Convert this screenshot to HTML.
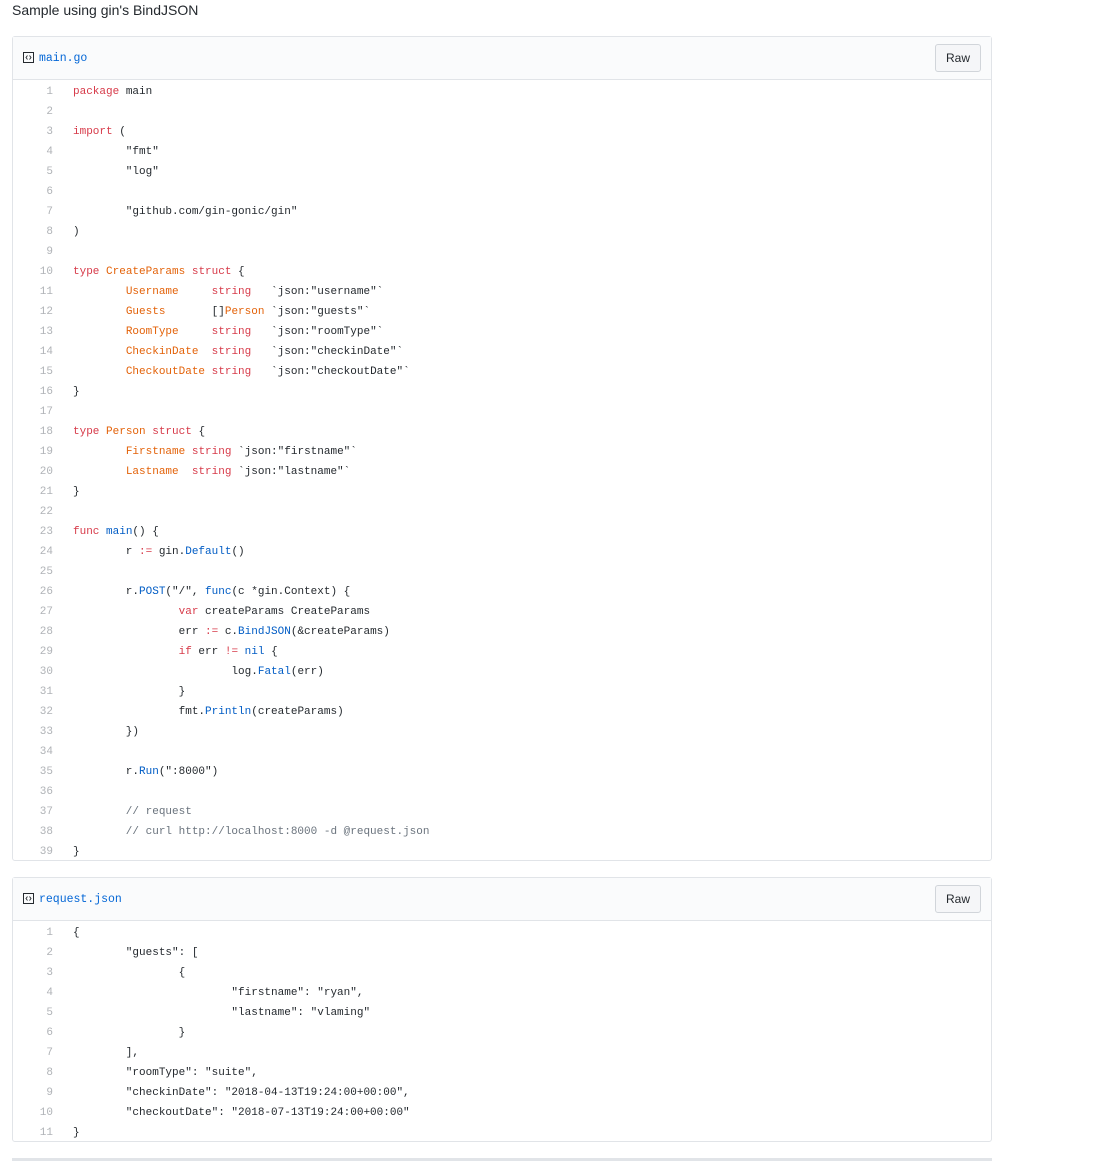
<!DOCTYPE html>
<html><head><meta charset="utf-8">
<style>
body{margin:0;background:#fff;font-family:"Liberation Sans",sans-serif;color:#24292e;width:1099px;height:1174px;overflow:hidden;position:relative}
.cap{position:absolute;left:12px;top:2px;font-size:14px;color:#24292e}
.box{position:absolute;left:12px;width:978px;border:1px solid #e1e4e8;border-radius:3px;background:#fff}
.hd{height:42px;background:#fafbfc;border-bottom:1px solid #e1e4e8;position:relative}
.fn{position:absolute;left:10px;top:15px;font-family:"Liberation Mono",monospace;font-size:11.5px;color:#0366d6;line-height:14px}
.fn svg{vertical-align:-2px;margin-right:5px}
.raw{position:absolute;right:10px;top:7px;width:46px;height:28px;border:1px solid #d1d5da;border-radius:3px;background:#f5f6f8;font-size:12px;text-align:center;line-height:26px;box-sizing:border-box;color:#24292e}
.code{font-family:"Liberation Mono",monospace;font-size:11px;line-height:20px;color:#24292e;position:relative;top:2px;margin-bottom:0}
.row{height:20px;display:flex;white-space:pre}
.n{width:40px;text-align:right;color:#b0b3b7;padding-right:20px;flex:none}
.k{color:#d73a49}.o{color:#e36209}.b{color:#005cc5}.c{color:#6a737d}
.rule{position:absolute;left:12px;top:1158px;width:980px;height:3px;background:#e1e4e8}
</style></head><body>
<div class="cap">Sample using gin's BindJSON</div>

<div class="box" style="top:36px">
<div class="hd"><div class="fn"><svg width="11" height="11" viewBox="0 0 11 11"><rect x="0.5" y="0.5" width="10" height="10" fill="none" stroke="#24292e"/><path d="M4.5 3.5L3 5.5L4.5 7.5M6.5 3.5L8 5.5L6.5 7.5" fill="none" stroke="#24292e" stroke-width="0.9"/></svg>main.go</div><div class="raw">Raw</div></div>
<div class="code">
<div class="row"><span class="n">1</span><span><span class="k">package</span> main</span></div>
<div class="row"><span class="n">2</span><span></span></div>
<div class="row"><span class="n">3</span><span><span class="k">import</span> (</span></div>
<div class="row"><span class="n">4</span><span>        "fmt"</span></div>
<div class="row"><span class="n">5</span><span>        "log"</span></div>
<div class="row"><span class="n">6</span><span></span></div>
<div class="row"><span class="n">7</span><span>        "github.com/gin-gonic/gin"</span></div>
<div class="row"><span class="n">8</span><span>)</span></div>
<div class="row"><span class="n">9</span><span></span></div>
<div class="row"><span class="n">10</span><span><span class="k">type</span> <span class="o">CreateParams</span> <span class="k">struct</span> {</span></div>
<div class="row"><span class="n">11</span><span>        <span class="o">Username</span>     <span class="k">string</span>   `json:"username"`</span></div>
<div class="row"><span class="n">12</span><span>        <span class="o">Guests</span>       []<span class="o">Person</span> `json:"guests"`</span></div>
<div class="row"><span class="n">13</span><span>        <span class="o">RoomType</span>     <span class="k">string</span>   `json:"roomType"`</span></div>
<div class="row"><span class="n">14</span><span>        <span class="o">CheckinDate</span>  <span class="k">string</span>   `json:"checkinDate"`</span></div>
<div class="row"><span class="n">15</span><span>        <span class="o">CheckoutDate</span> <span class="k">string</span>   `json:"checkoutDate"`</span></div>
<div class="row"><span class="n">16</span><span>}</span></div>
<div class="row"><span class="n">17</span><span></span></div>
<div class="row"><span class="n">18</span><span><span class="k">type</span> <span class="o">Person</span> <span class="k">struct</span> {</span></div>
<div class="row"><span class="n">19</span><span>        <span class="o">Firstname</span> <span class="k">string</span> `json:"firstname"`</span></div>
<div class="row"><span class="n">20</span><span>        <span class="o">Lastname</span>  <span class="k">string</span> `json:"lastname"`</span></div>
<div class="row"><span class="n">21</span><span>}</span></div>
<div class="row"><span class="n">22</span><span></span></div>
<div class="row"><span class="n">23</span><span><span class="k">func</span> <span class="b">main</span>() {</span></div>
<div class="row"><span class="n">24</span><span>        r <span class="k">:=</span> gin.<span class="b">Default</span>()</span></div>
<div class="row"><span class="n">25</span><span></span></div>
<div class="row"><span class="n">26</span><span>        r.<span class="b">POST</span>("/", <span class="b">func</span>(c *gin.Context) {</span></div>
<div class="row"><span class="n">27</span><span>                <span class="k">var</span> createParams CreateParams</span></div>
<div class="row"><span class="n">28</span><span>                err <span class="k">:=</span> c.<span class="b">BindJSON</span>(&amp;createParams)</span></div>
<div class="row"><span class="n">29</span><span>                <span class="k">if</span> err <span class="k">!=</span> <span class="b">nil</span> {</span></div>
<div class="row"><span class="n">30</span><span>                        log.<span class="b">Fatal</span>(err)</span></div>
<div class="row"><span class="n">31</span><span>                }</span></div>
<div class="row"><span class="n">32</span><span>                fmt.<span class="b">Println</span>(createParams)</span></div>
<div class="row"><span class="n">33</span><span>        })</span></div>
<div class="row"><span class="n">34</span><span></span></div>
<div class="row"><span class="n">35</span><span>        r.<span class="b">Run</span>(":8000")</span></div>
<div class="row"><span class="n">36</span><span></span></div>
<div class="row"><span class="n">37</span><span class="c">        // request</span></div>
<div class="row"><span class="n">38</span><span class="c">        // curl http://localhost:8000 -d @request.json</span></div>
<div class="row"><span class="n">39</span><span>}</span></div>
</div>
</div>

<div class="box" style="top:877px">
<div class="hd"><div class="fn"><svg width="11" height="11" viewBox="0 0 11 11"><rect x="0.5" y="0.5" width="10" height="10" fill="none" stroke="#24292e"/><path d="M4.5 3.5L3 5.5L4.5 7.5M6.5 3.5L8 5.5L6.5 7.5" fill="none" stroke="#24292e" stroke-width="0.9"/></svg>request.json</div><div class="raw">Raw</div></div>
<div class="code">
<div class="row"><span class="n">1</span><span>{</span></div>
<div class="row"><span class="n">2</span><span>        "guests": [</span></div>
<div class="row"><span class="n">3</span><span>                {</span></div>
<div class="row"><span class="n">4</span><span>                        "firstname": "ryan",</span></div>
<div class="row"><span class="n">5</span><span>                        "lastname": "vlaming"</span></div>
<div class="row"><span class="n">6</span><span>                }</span></div>
<div class="row"><span class="n">7</span><span>        ],</span></div>
<div class="row"><span class="n">8</span><span>        "roomType": "suite",</span></div>
<div class="row"><span class="n">9</span><span>        "checkinDate": "2018-04-13T19:24:00+00:00",</span></div>
<div class="row"><span class="n">10</span><span>        "checkoutDate": "2018-07-13T19:24:00+00:00"</span></div>
<div class="row"><span class="n">11</span><span>}</span></div>
</div>
</div>
<div class="rule"></div>
</body></html>
